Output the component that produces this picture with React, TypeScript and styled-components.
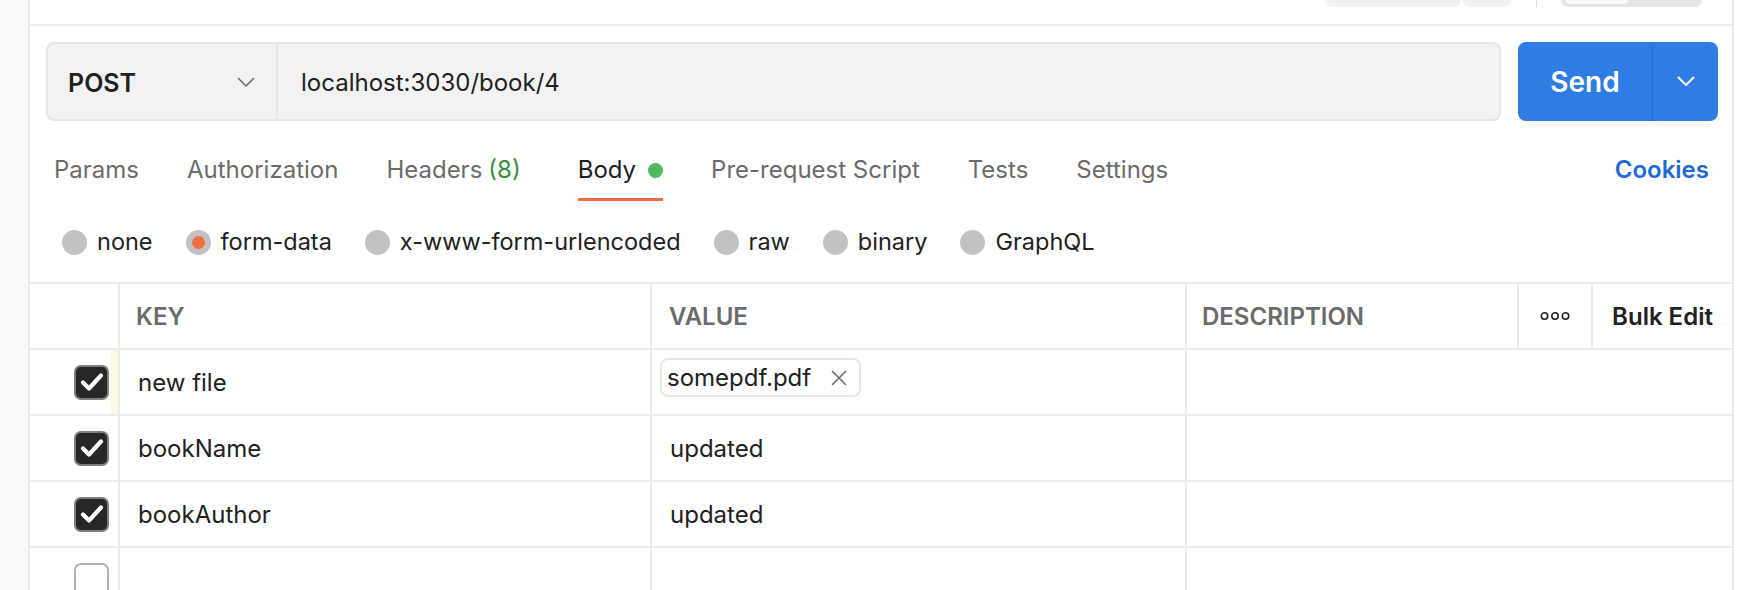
import React from 'react'
import styled, { createGlobalStyle } from 'styled-components'

const GlobalStyle = createGlobalStyle`
  html, body {
    margin: 0;
    padding: 0;
    background: #ffffff;
  }
  body {
    font-family: Inter, "Noto Sans", "Liberation Sans", sans-serif;
    color: #212121;
  }
  * {
    box-sizing: border-box;
  }
`

const Page = styled.div`
  display: flex;
  height: 590px;
  overflow: hidden;
  background: #ffffff;
`

const Gutter = styled.div`
  width: 30px;
  flex-shrink: 0;
  background: #f9f9f9;
  border-right: 2px solid #ebebeb;
`

const Panel = styled.div`
  width: 1704px;
  flex-shrink: 0;
  display: flex;
  flex-direction: column;
  border-right: 2px solid #ebebeb;
`

const TopBar = styled.div`
  height: 26px;
  flex-shrink: 0;
  display: flex;
  justify-content: flex-end;
  align-items: flex-start;
  padding-right: 30px;
  border-bottom: 2px solid #ebebeb;
`

const Segment = styled.div<{ $w: number }>`
  width: ${p => p.$w}px;
  height: 7px;
  background: #f2f2f2;
  border-radius: 0 0 7px 7px;

  & + & {
    margin-left: 2px;
  }
`

const ToolDivider = styled.div`
  width: 1px;
  height: 7px;
  margin: 0 24px 0 25px;
  background: #e0e0e0;
`

const Toggle = styled.div`
  width: 141px;
  height: 7px;
  padding-left: 5px;
  background: #e6e6e6;
  border-radius: 0 0 8px 8px;
`

const ToggleKnob = styled.div`
  width: 62px;
  height: 4px;
  background: #fafafa;
  border-radius: 0 0 5px 5px;
`

const RequestRow = styled.div`
  display: flex;
  gap: 17px;
  padding: 16px 14px 0 16px;
`

const UrlBar = styled.div`
  flex: 1;
  height: 79px;
  display: flex;
  background: #f2f2f2;
  border: 2px solid #e6e6e6;
  border-radius: 8px;
`

const MethodSelect = styled.div`
  width: 230px;
  display: flex;
  align-items: center;
  justify-content: space-between;
  padding: 2px 21px 0 20px;
  border-right: 2px solid #e6e6e6;
  font-size: 25px;
  font-weight: 600;
  color: #212121;
`

const UrlText = styled.div`
  flex: 1;
  display: flex;
  align-items: center;
  padding: 1px 0 0 23px;
  font-size: 24px;
  color: #212121;
`

const SendButton = styled.div`
  width: 200px;
  height: 79px;
  display: flex;
  background: #2f7de2;
  border-radius: 8px;
  color: #ffffff;
`

const SendLabel = styled.div`
  width: 135px;
  display: flex;
  align-items: center;
  justify-content: center;
  border-right: 1px solid #2a6cc7;
  font-size: 28px;
  font-weight: 600;
`

const SendCaret = styled.div`
  flex: 1;
  display: flex;
  align-items: center;
  justify-content: center;
`

const TabsRow = styled.div`
  display: flex;
  align-items: flex-end;
  gap: 48px;
  padding: 34px 23px 0 24px;
`

const Tab = styled.div<{ $active?: boolean }>`
  display: flex;
  align-items: center;
  gap: 12px;
  margin-left: ${p => (p.$active ? '9px' : '0')};
  font-size: 24px;
  line-height: 30px;
  padding-bottom: 13px;
  border-bottom: 3px solid ${p => (p.$active ? '#ef6f3f' : 'transparent')};
  color: ${p => (p.$active ? '#212121' : '#6b6b6b')};
  white-space: nowrap;
`

const Count = styled.span`
  color: #388e3c;
  margin-left: 6px;
`

const Dot = styled.span`
  width: 15px;
  height: 15px;
  border-radius: 50%;
  background: #50b95e;
`

const CookiesLink = styled(Tab)`
  margin-left: auto;
  color: #1f6ad4;
  font-weight: 600;
`

const RadioRow = styled.div`
  display: flex;
  align-items: center;
  gap: 33px;
  padding: 28px 0 0 32px;
  height: 54px;
`

const RadioItem = styled.div`
  display: flex;
  align-items: center;
  gap: 10px;
  font-size: 23.5px;
  line-height: 26px;
  color: #212121;
`

const RadioCircle = styled.span<{ $checked?: boolean }>`
  width: 25px;
  height: 25px;
  border-radius: 50%;
  background: #c2c2c2;
  display: flex;
  align-items: center;
  justify-content: center;

  &::after {
    content: '';
    width: 13px;
    height: 13px;
    border-radius: 50%;
    background: ${p => (p.$checked ? '#ef6f3f' : 'transparent')};
  }
`

const Table = styled.div`
  margin-top: 27px;
  border-top: 2px solid #ebebeb;
`

const HeaderRow = styled.div`
  display: grid;
  grid-template-columns: 90px 532px 535px 332px 74px 1fr;
  height: 66px;
  border-bottom: 2px solid #ebebeb;
`

const Row = styled.div`
  display: grid;
  grid-template-columns: 90px 532px 535px 1fr;
  height: 66px;
  border-bottom: 2px solid #ebebeb;
`

const Cell = styled.div<{ $pad?: number; $last?: boolean; $center?: boolean }>`
  display: flex;
  align-items: center;
  justify-content: ${p => (p.$center ? 'center' : 'flex-start')};
  padding-left: ${p => p.$pad ?? 18}px;
  border-right: ${p => (p.$last ? 'none' : '2px solid #ebebeb')};
  font-size: 24px;
  color: #212121;
  white-space: nowrap;
`

const HeadCell = styled(Cell)`
  font-weight: 600;
  color: #6b6b6b;
  text-transform: uppercase;
`

const BulkEdit = styled(Cell)`
  font-weight: 600;
  color: #212121;
`

const CheckCell = styled.div<{ $marked?: boolean }>`
  display: flex;
  align-items: center;
  justify-content: flex-end;
  padding-right: 9px;
  border-right: 2px solid #ebebeb;
  box-shadow: ${p => (p.$marked ? 'inset -7px 0 0 #fdf8e4' : 'none')};
`

const Checkbox = styled.span<{ $checked?: boolean }>`
  width: 35px;
  height: 35px;
  border-radius: 7px;
  display: flex;
  align-items: center;
  justify-content: center;
  background: ${p => (p.$checked ? '#262626' : '#ffffff')};
  border: 2px solid ${p => (p.$checked ? '#7d7d7d' : '#b3b3b3')};
`

const FileCell = styled(Cell)`
  align-items: flex-start;
  padding-top: 8px;
`

const FileChip = styled.div`
  height: 39px;
  display: inline-flex;
  align-items: center;
  gap: 20px;
  padding: 0 12px 0 5px;
  border: 2px solid #e6e6e6;
  border-radius: 8px;
  font-size: 24px;
  color: #212121;
`

const Chevron = ({ color, width }: { color: string; width: number }) => (
  <svg width="18" height="11" viewBox="0 0 18 11" fill="none">
    <polyline points="1.5,1.5 9,9 16.5,1.5" stroke={color} strokeWidth={width} strokeLinecap="round" strokeLinejoin="round" />
  </svg>
)

const CheckMark = () => (
  <svg width="24" height="20" viewBox="0 0 24 20" fill="none">
    <polyline points="3,10.5 9,16.5 21,3.5" stroke="#ffffff" strokeWidth="4.2" strokeLinecap="round" strokeLinejoin="round" />
  </svg>
)

const CloseIcon = () => (
  <svg width="16" height="16" viewBox="0 0 16 16" fill="none">
    <path d="M1.5 1.5 L14.5 14.5 M14.5 1.5 L1.5 14.5" stroke="#6b6b6b" strokeWidth="1.6" strokeLinecap="round" />
  </svg>
)

const MoreIcon = () => (
  <svg width="30" height="10" viewBox="0 0 30 10" fill="none">
    <circle cx="4.5" cy="5" r="3.2" stroke="#212121" strokeWidth="1.6" />
    <circle cx="15" cy="5" r="3.2" stroke="#212121" strokeWidth="1.6" />
    <circle cx="25.5" cy="5" r="3.2" stroke="#212121" strokeWidth="1.6" />
  </svg>
)

const bodyTypes = ['none', 'form-data', 'x-www-form-urlencoded', 'raw', 'binary', 'GraphQL']

const params = [
  { key: 'bookName', value: 'updated' },
  { key: 'bookAuthor', value: 'updated' },
]

export default function App() {
  return (
    <>
      <GlobalStyle />
      <Page>
        <Gutter />
        <Panel>
          <TopBar>
            <Segment $w={136} />
            <Segment $w={48} />
            <ToolDivider />
            <Toggle>
              <ToggleKnob />
            </Toggle>
          </TopBar>

          <RequestRow>
            <UrlBar>
              <MethodSelect>
                POST
                <Chevron color="#6b6b6b" width={1.6} />
              </MethodSelect>
              <UrlText>localhost:3030/book/4</UrlText>
            </UrlBar>
            <SendButton>
              <SendLabel>Send</SendLabel>
              <SendCaret>
                <Chevron color="#ffffff" width={2} />
              </SendCaret>
            </SendButton>
          </RequestRow>

          <TabsRow>
            <Tab>Params</Tab>
            <Tab>Authorization</Tab>
            <Tab>
              <span>
                Headers<Count>(8)</Count>
              </span>
            </Tab>
            <Tab $active>
              Body
              <Dot />
            </Tab>
            <Tab>Pre-request Script</Tab>
            <Tab>Tests</Tab>
            <Tab>Settings</Tab>
            <CookiesLink>Cookies</CookiesLink>
          </TabsRow>

          <RadioRow>
            {bodyTypes.map(t => (
              <RadioItem key={t}>
                <RadioCircle $checked={t === 'form-data'} />
                {t}
              </RadioItem>
            ))}
          </RadioRow>

          <Table>
            <HeaderRow>
              <CheckCell />
              <HeadCell $pad={16}>Key</HeadCell>
              <HeadCell $pad={17}>Value</HeadCell>
              <HeadCell $pad={15}>Description</HeadCell>
              <Cell $pad={0} $center>
                <MoreIcon />
              </Cell>
              <BulkEdit $pad={0} $center $last>
                Bulk Edit
              </BulkEdit>
            </HeaderRow>

            <Row>
              <CheckCell $marked>
                <Checkbox $checked>
                  <CheckMark />
                </Checkbox>
              </CheckCell>
              <Cell>new file</Cell>
              <FileCell $pad={8}>
                <FileChip>
                  somepdf.pdf
                  <CloseIcon />
                </FileChip>
              </FileCell>
              <Cell $last />
            </Row>

            {params.map(p => (
              <Row key={p.key}>
                <CheckCell>
                  <Checkbox $checked>
                    <CheckMark />
                  </Checkbox>
                </CheckCell>
                <Cell>{p.key}</Cell>
                <Cell>{p.value}</Cell>
                <Cell $last />
              </Row>
            ))}

            <Row>
              <CheckCell>
                <Checkbox />
              </CheckCell>
              <Cell />
              <Cell />
              <Cell $last />
            </Row>
          </Table>
        </Panel>
      </Page>
    </>
  )
}
